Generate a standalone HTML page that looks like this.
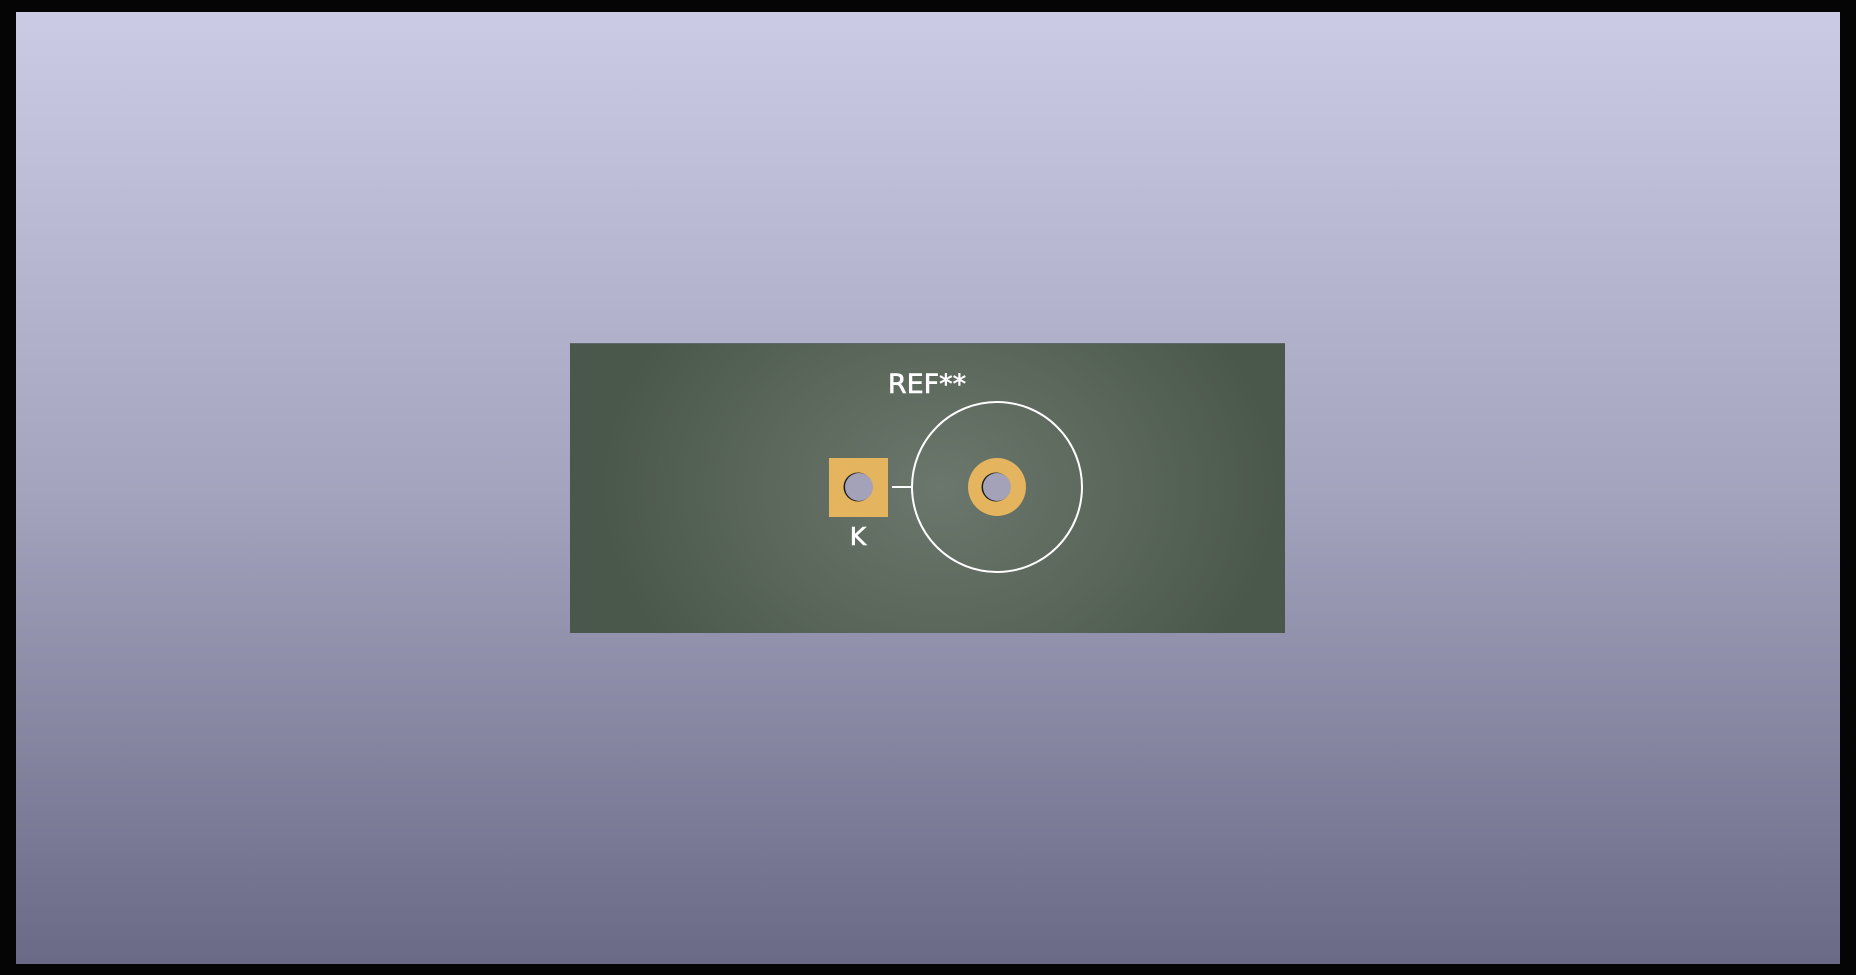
<!DOCTYPE html>
<html><head><meta charset="utf-8"><style>
html,body{margin:0;padding:0;width:1856px;height:975px;background:#050505;overflow:hidden}
#bg{position:absolute;left:16px;top:12px;width:1824px;height:952px;background:linear-gradient(#cbcbe5,#a4a4bf 50%,#6a6a86)}
#board{position:absolute;left:570px;top:343px;width:715px;height:289px;background:radial-gradient(ellipse 340px 270px at 370px 144px,#6b776c,#5c685c 50%,#4a574b);border-top:1px solid #5f6766}
svg{position:absolute;left:0;top:0}
</style></head><body>
<div id="bg"></div>
<div id="board"></div>
<svg width="1856" height="975">
<circle cx="997" cy="487" r="85" fill="none" stroke="#fff" stroke-width="2"/>
<line x1="892" y1="487" x2="912" y2="487" stroke="#fff" stroke-width="2"/>
<rect x="829" y="458" width="59" height="59" fill="#e5b45e"/>
<circle cx="858" cy="487" r="14.5" fill="#1a1a1a"/>
<circle cx="859" cy="487" r="14" fill="#a4a2b8"/>
<circle cx="997" cy="487" r="29" fill="#e5b45e"/>
<circle cx="996" cy="487" r="14.5" fill="#1a1a1a"/>
<circle cx="997" cy="487" r="14" fill="#a4a2b8"/>
<text x="927" y="393" font-family="DejaVu Sans, Liberation Sans, sans-serif" font-size="27" fill="#fff" text-anchor="middle" stroke="#fff" stroke-width="0.6">REF**</text>
<text x="858" y="545" font-family="DejaVu Sans, Liberation Sans, sans-serif" font-size="25" fill="#fff" text-anchor="middle" stroke="#fff" stroke-width="0.6">K</text>
</svg>
</body></html>
